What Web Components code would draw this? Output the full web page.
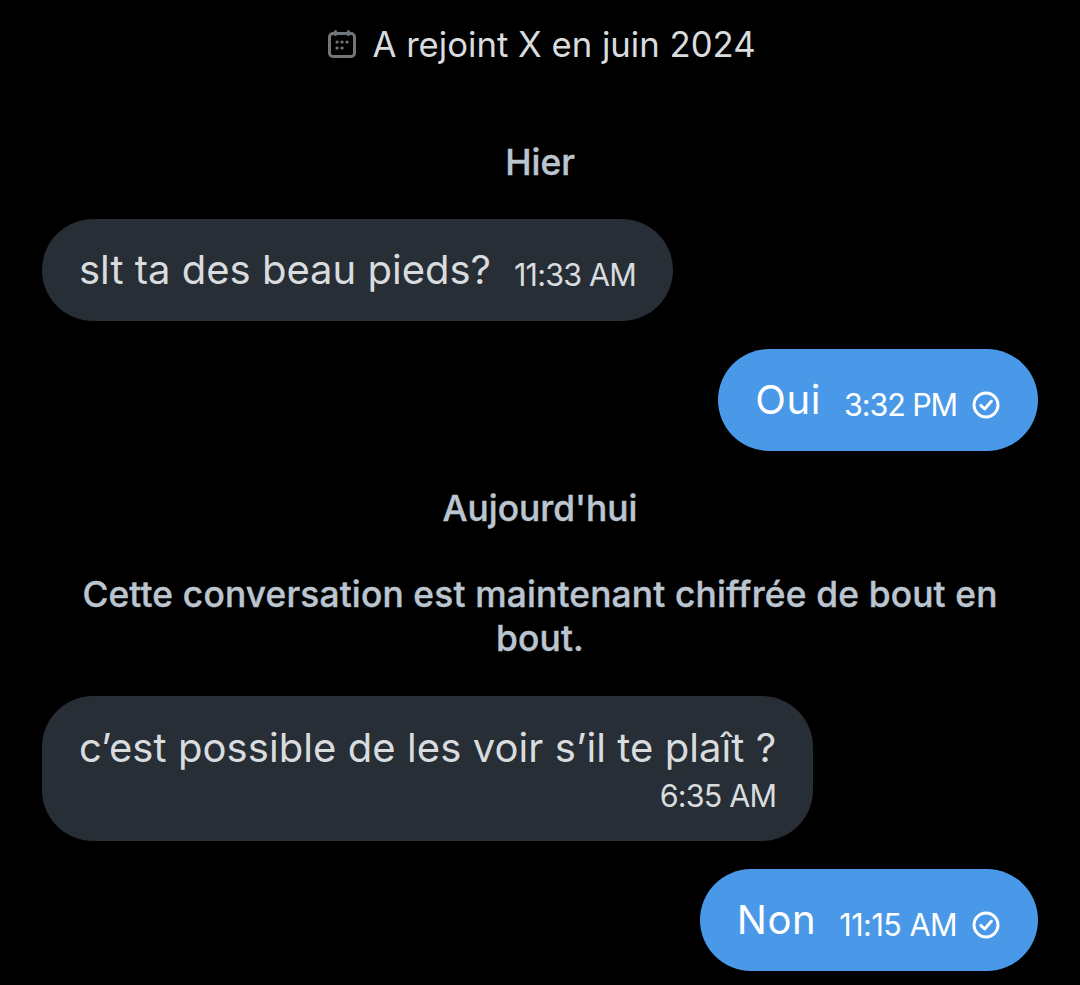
<!DOCTYPE html>
<html lang="fr">
<head>
<meta charset="utf-8">
<title>Conversation</title>
<style>
  html, body { margin: 0; background: #000; }
  body { font-family: Inter, "Liberation Sans", sans-serif; width: 1080px; height: 985px; overflow: hidden; }
</style>
</head>
<body>
<chat-thread>
  <joined-note>A rejoint X en juin 2024</joined-note>
  <day-label style="--top: 74px">Hier</day-label>
  <chat-bubble style="--top: 34px" time="11:33 AM">slt ta des beau pieds?</chat-bubble>
  <chat-bubble style="--top: 28px; --track: -1.1px" mine time="3:32 PM">Oui</chat-bubble>
  <day-label style="--top: 36px">Aujourd'hui</day-label>
  <day-label style="--top: 42px; --spread: 0.17px; margin-bottom: -1px">Cette conversation est maintenant chiffrée de bout en bout.</day-label>
  <chat-bubble style="--top: 36px" stacked time="6:35 AM">c’est possible de les voir s’il te plaît ?</chat-bubble>
  <chat-bubble style="--top: 28px; --track: -0.5px" mine time="11:15 AM">Non</chat-bubble>
</chat-thread>

<script>
class ChatThread extends HTMLElement {
    constructor() {
        super();
        this.attachShadow({ mode: 'open' });
        this.shadowRoot.innerHTML = `
            <style>
                :host {
                    display: flex;
                    flex-direction: column;
                    padding: 0 42px;
                }
            </style>
            <slot></slot>
        `;
    }
}

class JoinedNote extends HTMLElement {
    constructor() {
        super();
        this.attachShadow({ mode: 'open' });
        this.shadowRoot.innerHTML = `
            <style>
                :host {
                    display: flex;
                    justify-content: center;
                    align-items: center;
                    gap: 15px;
                    padding: 22px 0 1px 3px;
                    font-size: 34.7px;
                    line-height: 44px;
                    color: #d8dcdf;
                }
                svg { width: 30px; height: 30px; flex: none; }
            </style>
            <svg viewBox="0 0 30 30" fill="none" stroke="#71767b" stroke-width="3" stroke-linecap="round">
                <rect x="2.5" y="4.5" width="25" height="23" rx="3.5"/>
                <path d="M8.5 2.5v3M21.5 2.5v3"/>
                <path d="M10 13h.1M15 13h.1M20 13h.1M10 19h.1M15 19h.1" stroke-width="3.2"/>
            </svg>
            <span><slot></slot></span>
        `;
    }
}

class DayLabel extends HTMLElement {
    constructor() {
        super();
        this.attachShadow({ mode: 'open' });
        this.shadowRoot.innerHTML = `
            <style>
                :host {
                    display: block;
                    margin-top: var(--top, 0);
                    padding: 0 20px;
                    text-align: center;
                    font-size: 35.3px;
                    line-height: 44px;
                    font-weight: 500;
                    letter-spacing: var(--spread, 0);
                    -webkit-text-stroke: 0.4px currentColor;
                    color: #bbc5d0;
                }
            </style>
            <slot></slot>
        `;
    }
}

class ChatBubble extends HTMLElement {
    constructor() {
        super();
        this.attachShadow({ mode: 'open' });
        this.shadowRoot.innerHTML = `
            <style>
                :host {
                    display: flex;
                    margin-top: var(--top, 0);
                }
                :host([mine]) { justify-content: flex-end; }
                .bubble {
                    display: flex;
                    align-items: center;
                    gap: 23px;
                    height: 102px;
                    box-sizing: border-box;
                    padding: 0 37px;
                    border-radius: 51px;
                    background: #272e35;
                    color: #d9dcdf;
                }
                :host([mine]) .bubble {
                    background: #4a99e9;
                    color: #fff;
                }
                :host([stacked]) .bubble {
                    flex-direction: column;
                    align-items: stretch;
                    gap: 0;
                    height: 145px;
                    padding-top: 29px;
                    justify-content: flex-start;
                }
                .text {
                    font-size: 40px;
                    line-height: 46px;
                    white-space: nowrap;
                }
                :host([mine]) .text { letter-spacing: 0.6px; }
                :host([stacked]) .text { letter-spacing: 0.07px; }
                .meta {
                    display: flex;
                    align-items: center;
                    justify-content: flex-end;
                    gap: 14px;
                    padding-top: 10px;
                    font-size: 30.5px;
                    line-height: 36px;
                    letter-spacing: var(--track, -0.8px);
                    white-space: nowrap;
                }
                :host([stacked]) .meta { padding-top: 7px; }
                svg { display: none; width: 30px; height: 30px; }
                :host([mine]) svg { display: block; }
            </style>
            <div class="bubble">
                <span class="text"><slot></slot></span>
                <span class="meta">
                    <span id="time"></span>
                    <svg viewBox="0 0 30 30" fill="none" stroke="#fff" stroke-width="2.9" stroke-linecap="round" stroke-linejoin="round">
                        <circle cx="15" cy="15" r="12"/>
                        <path d="M9.8 15.4l3.8 3.6 6.8-7.8"/>
                    </svg>
                </span>
            </div>
        `;
    }

    connectedCallback() {
        this.shadowRoot.querySelector('#time').textContent = this.getAttribute('time');
    }
}

customElements.define('chat-thread', ChatThread);
customElements.define('joined-note', JoinedNote);
customElements.define('day-label', DayLabel);
customElements.define('chat-bubble', ChatBubble);
</script>
</body>
</html>
